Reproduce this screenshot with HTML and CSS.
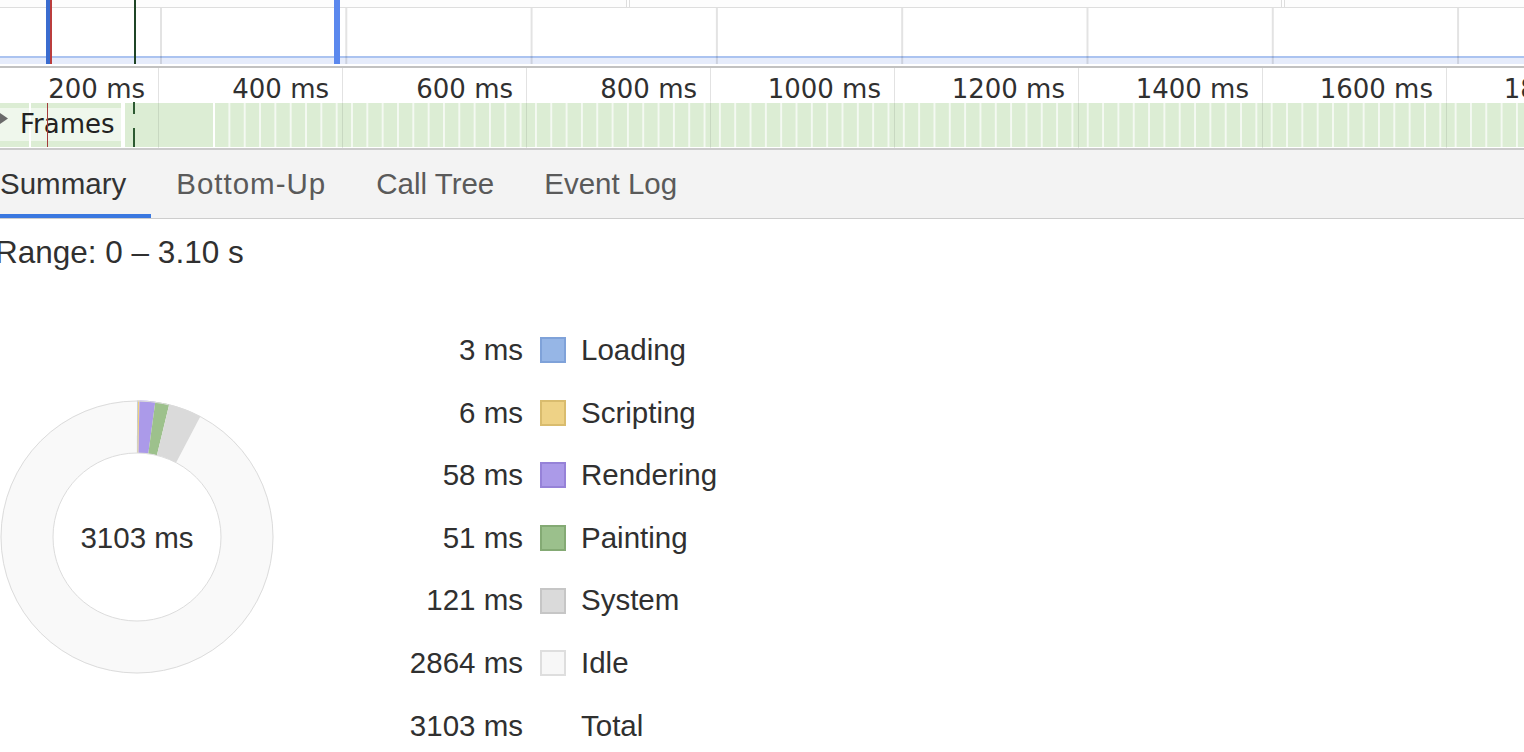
FILE: index.html
```html
<!DOCTYPE html>
<html>
<head>
<meta charset="utf-8">
<link rel="stylesheet" href="styles.css">
</head>
<body>
<div class="overview">
  <div class="filmstrip">
    <div class="shot shot-a"></div>
    <div class="shot shot-b"></div>
    <div class="shot shot-c"></div>
  </div>
  <div class="chart"></div>
  <div class="sel-line"></div>
  <div class="sel-fill"></div>
  <div class="grid-lines"></div>
  <div class="marker m-blue-dark"></div>
  <div class="marker m-red"></div>
  <div class="marker m-green"></div>
  <div class="marker m-blue"></div>
</div>
<div class="divider"></div>
<div class="ruler">
  <div class="tick">200 ms</div>
  <div class="tick">400 ms</div>
  <div class="tick">600 ms</div>
  <div class="tick">800 ms</div>
  <div class="tick">1000 ms</div>
  <div class="tick">1200 ms</div>
  <div class="tick">1400 ms</div>
  <div class="tick">1600 ms</div>
  <div class="tick">1800 ms</div>
</div>
<div class="frames">
  <div class="frame f1"></div>
  <div class="frame f2"></div>
  <div class="frame f3"></div>
  <div class="frame-run"></div>
  <div class="frames-label">
    <svg class="tri" width="8" height="11" viewBox="0 0 8 11"><path d="M0 0 L8 5.5 L0 11 Z" fill="#6a6a6a"/></svg>
    <span class="frames-text">Frames</span>
  </div>
  <div class="fmark fm-red"></div>
  <div class="fmark fm-green-a"></div>
  <div class="fmark fm-green-b"></div>
</div>
<div class="sep"></div>
<div class="tabs">
  <div class="tab active">Summary</div>
  <div class="tab tab-wide">Bottom-Up</div>
  <div class="tab">Call Tree</div>
  <div class="tab">Event Log</div>
</div>
<div class="range">Range: 0 – 3.10 s</div>
<div class="summary">
  <div class="donut">
    <svg width="274" height="274" viewBox="0 0 274 274">
      <g transform="rotate(-90 137 137)" fill="none" stroke-width="52.5">
        <circle cx="137" cy="137" r="110.25" pathLength="3103" stroke="#f9f9f9" stroke-dasharray="2864 239" stroke-dashoffset="-239"/>
        <circle cx="137" cy="137" r="110.25" pathLength="3103" stroke="#95b4e6" stroke-dasharray="3 3100" stroke-dashoffset="0"/>
        <circle cx="137" cy="137" r="110.25" pathLength="3103" stroke="#eecf7e" stroke-dasharray="6 3097" stroke-dashoffset="-3"/>
        <circle cx="137" cy="137" r="110.25" pathLength="3103" stroke="#ab9ae9" stroke-dasharray="58 3045" stroke-dashoffset="-9"/>
        <circle cx="137" cy="137" r="110.25" pathLength="3103" stroke="#9dc18c" stroke-dasharray="51 3052" stroke-dashoffset="-67"/>
        <circle cx="137" cy="137" r="110.25" pathLength="3103" stroke="#dadada" stroke-dasharray="121 2982" stroke-dashoffset="-118"/>
      </g>
      <circle cx="137" cy="137" r="136" fill="none" stroke="#dcdcdc" stroke-width="1"/>
      <circle cx="137" cy="137" r="84" fill="#fff" stroke="#dcdcdc" stroke-width="1"/>
      <text x="137" y="148" text-anchor="middle" class="donut-text">3103 ms</text>
    </svg>
  </div>
  <div class="legend">
    <div class="val">3 ms</div><div class="sw sw-loading"></div><div class="lab">Loading</div>
    <div class="val">6 ms</div><div class="sw sw-scripting"></div><div class="lab">Scripting</div>
    <div class="val">58 ms</div><div class="sw sw-rendering"></div><div class="lab">Rendering</div>
    <div class="val">51 ms</div><div class="sw sw-painting"></div><div class="lab">Painting</div>
    <div class="val">121 ms</div><div class="sw sw-system"></div><div class="lab">System</div>
    <div class="val">2864 ms</div><div class="sw sw-idle"></div><div class="lab">Idle</div>
    <div class="val">3103 ms</div><div class="sw-empty"></div><div class="lab">Total</div>
  </div>
</div>
</body>
</html>
```
FILE: styles.css
```css
html, body {
  margin: 0;
  padding: 0;
  background: #fff;
}
body {
  width: 1524px;
  height: 752px;
  overflow: hidden;
  font-family: "Liberation Sans", Arial, sans-serif;
  color: #333;
}

/* ---------- overview ---------- */
.overview {
  position: relative;
  height: 66px;
}
.filmstrip {
  display: flex;
  gap: 2px;
  height: 7px;
  border-bottom: 1px solid #dedede;
}
.shot {
  box-sizing: border-box;
  background: #fdfdfd;
  border-right: 1px solid #dedede;
}
.shot-a { width: 627px; }
.shot-b { width: 653px; border-left: 1px solid #dedede; }
.shot-c { flex: 1; border-left: 1px solid #dedede; border-right: 0; }
.chart { height: 48px; }
.sel-line { height: 2px; background: #abc3f0; }
.sel-fill { height: 6px; background: #e6ecfb; }
.grid-lines {
  position: absolute;
  left: 0;
  right: 0;
  top: 8px;
  height: 56px;
  background-image: linear-gradient(90deg, rgba(0,0,0,0.11) 0 2px, transparent 2px);
  background-size: 185.3px 100%;
  background-repeat: repeat-x;
  background-position: 160px 0;
}
.marker {
  position: absolute;
  top: 0;
  height: 64px;
}
.m-blue-dark { left: 46px; width: 4px; background: #3a6ccf; }
.m-red { left: 50px; width: 2px; background: #bb3d3d; }
.m-green { left: 134px; width: 2px; background: #1f4526; }
.m-blue { left: 334px; width: 6px; background: #5b88ee; }

.divider { height: 2px; background: #c2c2c2; }

/* ---------- ruler ---------- */
.ruler {
  display: flex;
  margin-left: -25px;
  height: 33px;
  font-family: "DejaVu Sans", Verdana, sans-serif;
  font-size: 26px;
  line-height: 30px;
  color: #303030;
  white-space: nowrap;
}
.tick {
  flex: none;
  box-sizing: border-box;
  width: 184px;
  padding: 6px 13px 0 0;
  text-align: right;
  border-right: 1px solid #e2e2e2;
}

/* ---------- frames ---------- */
.frames {
  position: relative;
  box-sizing: border-box;
  height: 47px;
  padding: 2px 0 1px;
  display: flex;
  background: #fff;
}
.frame { background: #dcedd4; flex: none; }
.f1 { width: 29px; }
.f2 { width: 90px; margin-left: 2px; }
.f3 { width: 88px; margin-left: 4px; }
.frame-run {
  flex: 1;
  margin-left: 2px;
  background-image: linear-gradient(90deg, #dcedd4 0 13.3px, #f4f9f2 13.3px);
  background-size: 15.33px 100%;
  background-repeat: repeat-x;
}
.frames::after {
  content: "";
  position: absolute;
  inset: 0;
  background-image: linear-gradient(90deg, rgba(0,0,0,0.09) 0 1px, transparent 1px);
  background-size: 184px 100%;
  background-repeat: repeat-x;
  background-position: 158px 0;
}
.frames-label {
  position: absolute;
  left: 0;
  top: 7px;
  width: 121px;
  height: 33px;
  background: rgba(255,255,255,0.55);
  z-index: 1;
}
.tri {
  position: absolute;
  left: 0;
  top: 5px;
}
.frames-text {
  position: absolute;
  left: 20px;
  top: 0;
  font-family: "DejaVu Sans", Verdana, sans-serif;
  font-size: 26px;
  line-height: 33px;
  color: #222;
}
.fmark {
  position: absolute;
  z-index: 2;
}
.fm-red { left: 47px; top: 2px; height: 44px; width: 1px; background: #a33b3b; }
.fm-green-a { left: 133px; top: 1px; height: 12px; width: 2px; background: #2c5a31; }
.fm-green-b { left: 133px; top: 27px; height: 19px; width: 2px; background: #2c5a31; }

.sep { height: 2px; background: #cbcbcb; }

/* ---------- tabs ---------- */
.tabs {
  display: flex;
  height: 68px;
  background: #f3f3f3;
  border-bottom: 1px solid #cdcdcd;
}
.tab {
  box-sizing: border-box;
  height: 68px;
  padding: 0 25px;
  font-size: 29.5px;
  line-height: 67px;
  color: #5a5a5a;
  border-bottom: 4px solid transparent;
  white-space: nowrap;
}
.tab:first-child { margin-left: -25px; }
.tab-wide { letter-spacing: 1px; }
.tab.active {
  color: #333;
  border-bottom-color: #3a78e0;
}

/* ---------- summary ---------- */
.range {
  margin-left: -5px;
  padding-top: 16px;
  font-size: 31.5px;
  line-height: 34px;
  color: #303030;
}
.summary {
  display: flex;
  margin-top: 48px;
}
.donut {
  width: 274px;
  flex: none;
  margin-top: 83px;
}
.donut svg { display: block; }
.donut-text {
  font-family: "Liberation Sans", Arial, sans-serif;
  font-size: 29.5px;
  fill: #303030;
}
.legend {
  display: grid;
  grid-template-columns: 249px 26px auto;
  grid-auto-rows: 62.6px;
  column-gap: 16px;
  padding-top: 2px;
  font-size: 29.5px;
  line-height: 62.6px;
  color: #303030;
}
.val { text-align: right; }
.sw {
  align-self: center;
  box-sizing: border-box;
  width: 26px;
  height: 26px;
  margin-left: 1px;
  border: 2px solid;
}
.sw-loading { background: #96b6e6; border-color: #7fa2d9; }
.sw-scripting { background: #eed286; border-color: #d9bc6e; }
.sw-rendering { background: #ab9ae8; border-color: #9682d8; }
.sw-painting { background: #9bc08c; border-color: #84aa74; }
.sw-system { background: #dadada; border-color: #c6c6c6; }
.sw-idle { background: #f7f7f7; border-color: #dedede; }
```
